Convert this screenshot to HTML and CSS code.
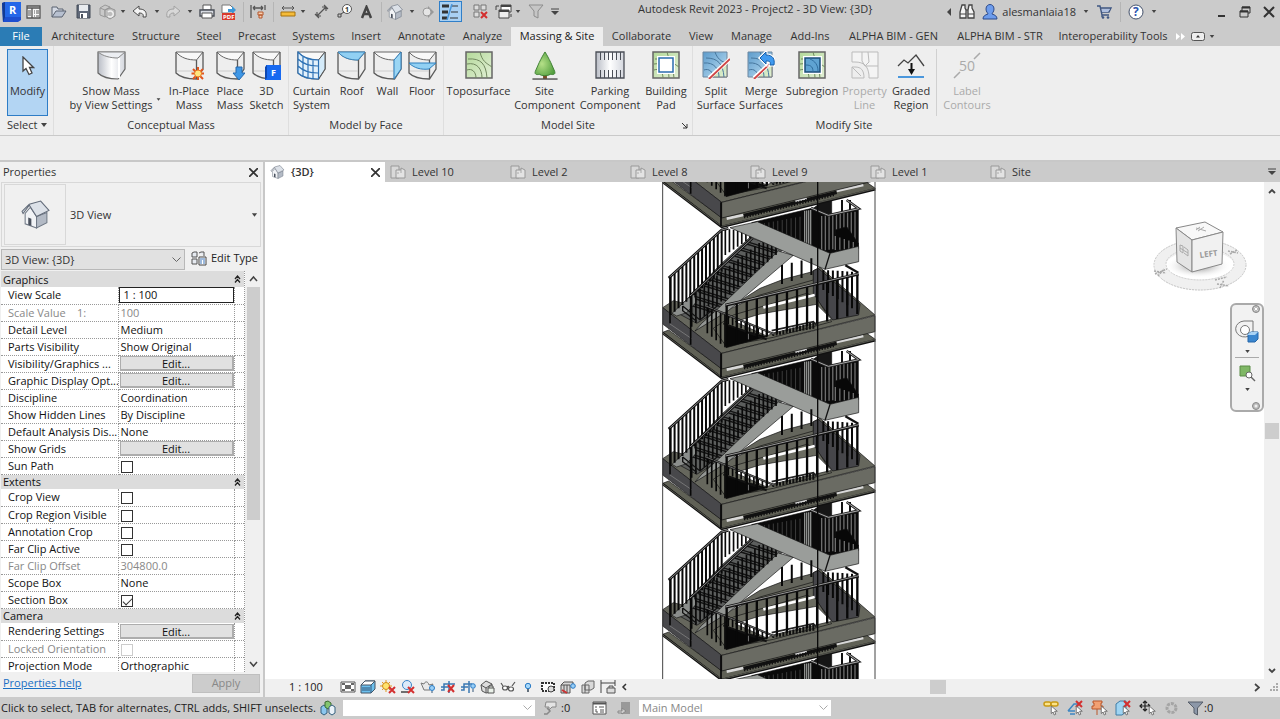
FILE: index.html
```html
<!DOCTYPE html>
<html lang="en">
<head>
<meta charset="utf-8">
<title>Autodesk Revit 2023 - Project2 - 3D View: {3D}</title>
<link rel="stylesheet" href="styles.css">
</head>
<body>
<svg class="defs" aria-hidden="true">
<defs>
<linearGradient id="gBlue" x1="0" y1="0" x2="1" y2="1"><stop offset="0" stop-color="#5c9bcb"/><stop offset="1" stop-color="#bfe0f4"/></linearGradient>
<linearGradient id="gGreen" x1="0" y1="0" x2="1" y2="1"><stop offset="0" stop-color="#b4d99a"/><stop offset="1" stop-color="#e2f0d6"/></linearGradient>
<linearGradient id="gGrey" x1="0" y1="0" x2="1" y2="0"><stop offset="0" stop-color="#b9bdc6"/><stop offset=".5" stop-color="#fff"/><stop offset="1" stop-color="#d4d7de"/></linearGradient>
<radialGradient id="gTree" cx=".35" cy=".5" r=".7"><stop offset="0" stop-color="#b5e088"/><stop offset="1" stop-color="#4f9c3c"/></radialGradient>
<symbol id="mass" viewBox="0 0 29 29"><path d="M1 1H28L21.500 9C13 9 6 7 1 1Z" fill="#f8f8f8" stroke="#666"/><path d="M1 1V22C6 27 14 28 21.500 28L28 18V1M21.500 9V28" fill="none" stroke="#5a5a5a" stroke-width="1.300"/><path d="M2 20H21" stroke="#ccc"/></symbol>
<symbol id="house" viewBox="0 0 28 28"><path d="M4 13V23L15 27V16L9 7Z" fill="#f1f3f6" stroke="#707986"/><path d="M15 16V27L25 22V12Z" fill="#b3bac5" stroke="#707986"/><path d="M1 11L8 4L19 1L27 10L15 16L8 5L2 13Z" fill="#dce1e8" stroke="#626b79"/><path d="M7 17L10 18V25L7 24Z" fill="#4b525e"/></symbol>
<symbol id="sheet" viewBox="0 0 16 15"><path d="M1 1H9V13H1Z" fill="#d9d9d9" stroke="#999"/><path d="M6 5H11V3L15 5V13H6Z" fill="#e3e3e3" stroke="#999"/><path d="M7 8H9M11 8V5" stroke="#aaa"/></symbol>
<symbol id="dd" viewBox="0 0 8 4"><path d="M1 0H7L4 4Z" fill="#444"/></symbol>
<symbol id="arrow" viewBox="0 0 12 14"><path d="M3 1V11L5.500 9L7 13L9 12L7.500 8H11Z" fill="#fff" stroke="#555"/></symbol>
<symbol id="contour" viewBox="0 0 28 28"><path d="M1 1H27V27H1Z" fill="url(#gGreen)" stroke="#666" stroke-width="1.500"/><path d="M2 19C7 17 11 21 11 27M2 13C12 11 17 18 17 27M3 8C16 7 21 13 22 27M15 1C17 10 21 12 27 16" fill="none" stroke="#71885f"/></symbol>
<symbol id="surf" viewBox="0 0 28 28"><path d="M1 1H25V26H1Z" fill="url(#gBlue)" stroke="#6c87a0"/><path d="M25 8V26H9Z" fill="url(#gGreen)" stroke="#777"/><path d="M2 19C7 17 11 21 11 26M2 12C12 11 17 18 17 26M4 7C16 7 21 13 22 26M13 1C15 7 19 11 25 12" fill="none" stroke="#47779e"/><path d="M7 27L28 8" stroke="#fff" stroke-width="4"/><path d="M7 28L28 8" stroke="#cf4545" stroke-width="1.800"/></symbol>
</defs>
</svg>

<div class="app">
<header class="top">
  <div class="titlebar">
    <div class="qat">
      <button class="ib" aria-label="Revit"><svg width="20" height="20" viewBox="0 0 20 20"><path d="M1 1L4 0H20V18L17 20H2Z" fill="#1d4fd0"/><path d="M4 0H20V15H4Z" fill="#2467e8"/><path d="M1 1L4 0V15L2 20Z" fill="#123a94"/><text x="8" y="12" class="logo">R</text></svg></button>
      <button class="ib" aria-label="Home"><svg width="15" height="14" viewBox="0 0 15 14"><path d="M1 1H14V13H1Z" fill="#f7f7f7" stroke="#555" stroke-width="1.300"/><path d="M1 3H14M6 3V13" stroke="#555" stroke-width="1.300"/><path d="M2 6H5M2 8H5M2 10H5M8 6H9M10 6H13M8 8H9M10 8H13M8 11H9M10 11H13" stroke="#555"/></svg></button>
      <button class="ib" aria-label="Open"><svg width="16" height="13" viewBox="0 0 16 13"><path d="M1 12V2H6L7 4H12V6" fill="#d5dae4" stroke="#5a6270"/><path d="M1 12L5 6H15L11 12Z" fill="#b7c0d0" stroke="#5a6270"/></svg></button>
      <button class="ib" aria-label="Save"><svg width="15" height="15" viewBox="0 0 15 15"><path d="M1 1H14V14H1Z" fill="#5f6878" stroke="#434a57"/><path d="M3 1H12V7H3Z" fill="#e8ebef"/><path d="M4 9H11V14H4Z" fill="#fff"/><path d="M5 10H7V14H5Z" fill="#4b525e"/></svg></button>
      <button class="ib" aria-label="Sync"><svg width="17" height="16" viewBox="0 0 17 16"><path d="M1 4L6 1L11 3V10L6 13L1 11Z" fill="#c9c9c9" stroke="#999"/><path d="M1 4L6 6L11 3M6 6V13" fill="none" stroke="#999"/><path d="M6 6L11 4L16 6V12L11 15L6 12Z" fill="#bcbcbc" stroke="#959595"/><path d="M9 8A3 3 0 1 1 9 12" fill="none" stroke="#f0f0f0" stroke-width="1.500"/></svg></button>
      <svg class="dd"><use href="#dd"/></svg>
      <button class="ib" aria-label="Undo"><svg width="16" height="14" viewBox="0 0 16 14"><path d="M1 6L7 1V4C13 4 15 7 14 12H11C12 9 10 8 7 8V11Z" fill="#f4f4f4" stroke="#4d4d4d"/></svg></button>
      <svg class="dd"><use href="#dd"/></svg>
      <button class="ib" aria-label="Redo"><svg width="16" height="14" viewBox="0 0 16 14"><path d="M15 6L9 1V4C3 4 1 7 2 12H5C4 9 6 8 9 8V11Z" fill="#d8d8d8" stroke="#a2a2a2"/></svg></button>
      <svg class="dd"><use href="#dd"/></svg>
      <button class="ib" aria-label="Print"><svg width="16" height="15" viewBox="0 0 16 15"><path d="M4 1H12V6H4Z" fill="#fff" stroke="#555"/><path d="M1 6H15V12H1Z" fill="#d6dae1" stroke="#4a4f58" stroke-width="1.400"/><path d="M3 9H13V14H3Z" fill="#fff" stroke="#555"/></svg></button>
      <button class="ib" aria-label="Export PDF"><svg width="16" height="16" viewBox="0 0 16 16"><path d="M1 1H9L12 4V9H1Z" fill="#fff" stroke="#777"/><path d="M7 5H11V2L15 6L11 10V8H7Z" fill="#3b97d8"/><path d="M1 9H14V16H1Z" fill="#d93a2c"/><text x="2" y="15" class="pdf">PDF</text></svg></button>
      <i class="sep"></i>
      <button class="ib" aria-label="Align"><svg width="16" height="15" viewBox="0 0 16 15"><path d="M1 1V14M15 1V6M3 4H13M3 4L5 2M3 4L5 6M13 4L11 2M13 4L11 6" stroke="#555" fill="none" stroke-width="1.300"/><path d="M8 8H13V11H8ZM9 11H12V14H9Z" fill="#f7d0b2" stroke="#b5562c"/></svg></button>
      <i class="sep"></i>
      <button class="ib" aria-label="Measure"><svg width="16" height="11" viewBox="0 0 16 11"><path d="M2 2H14M2 2L4 0M2 2L4 4M14 2L12 0M14 2L12 4" stroke="#555" fill="none"/><path d="M1 6H15V10H1Z" fill="#f5bc3a" stroke="#a6720f"/></svg></button>
      <svg class="dd"><use href="#dd"/></svg>
      <button class="ib" aria-label="Aligned Dimension"><svg width="15" height="15" viewBox="0 0 15 15"><path d="M3 12L12 3M1 10L5 14M10 1L14 5M3 12V8M3 12H7M12 3V7M12 3H8" stroke="#555" fill="none" stroke-width="1.200"/></svg></button>
      <button class="ib" aria-label="Tag"><svg width="15" height="15" viewBox="0 0 15 15"><circle cx="10" cy="5" r="4.500" fill="#fff" stroke="#555"/><path d="M1 10H4V13H1ZM4 10L7 8" stroke="#444" fill="none"/><text x="8" y="8" class="one">1</text></svg></button>
      <button class="ib" aria-label="Text"><svg width="13" height="14" viewBox="0 0 13 14"><path d="M2 13L6.500 2L11 13M4 9H9" fill="none" stroke="#444" stroke-width="2.500"/></svg></button>
      <i class="sep"></i>
      <button class="ib" aria-label="Default 3D View"><svg width="16" height="16"><use href="#house"/></svg></button>
      <svg class="dd"><use href="#dd"/></svg>
      <button class="ib" aria-label="Section"><svg width="14" height="14" viewBox="0 0 14 14"><path d="M7 1L13 7L7 13Z" fill="#999"/><circle cx="6" cy="7" r="4" fill="#e5e5e5" stroke="#999"/></svg></button>
      <button class="ib on" aria-label="Thin Lines"><svg width="18" height="16" viewBox="0 0 18 16"><path d="M1 2H8M1 8H7M1 14H6" stroke="#333" stroke-width="3"/><path d="M11 2H17M10 8H17M9 14H17" stroke="#333"/><path d="M11 0L6 16" stroke="#4b96d8" stroke-width="1.500"/></svg></button>
      <button class="ib" aria-label="Close Inactive"><svg width="15" height="15" viewBox="0 0 15 15"><path d="M1 1H6V6H1ZM8 1H13V6H8ZM1 8H6V13H1Z" fill="#ddd" stroke="#777"/><path d="M8 8L14 14M14 8L8 14" stroke="#d32f2f" stroke-width="2"/></svg></button>
      <button class="ib" aria-label="Switch Windows"><svg width="17" height="15" viewBox="0 0 17 15"><path d="M6 1H16V8H6Z" fill="#fff" stroke="#444"/><path d="M4 6H14V14H4Z" fill="#eee" stroke="#444"/><path d="M4 7H14M6 2H16" stroke="#444" stroke-width="2"/><path d="M1 6V2H4M16 10V13" stroke="#444" fill="none"/></svg></button>
      <svg class="dd"><use href="#dd"/></svg>
      <button class="ib" aria-label="Filter"><svg width="16" height="15" viewBox="0 0 16 15"><path d="M1 1H15L10 7V14L6 12V7Z" fill="#c6c6c6" stroke="#8d8d8d"/></svg></button>
      <button class="ib" aria-label="Customize"><svg width="8" height="8" viewBox="0 0 8 8"><path d="M0 1H8" stroke="#444"/><path d="M0 3H8L4 7Z" fill="#444"/></svg></button>
    </div>
    <div class="apptitle">Autodesk Revit 2023 - Project2 - 3D View: {3D}</div>
    <div class="account">
      <svg width="5" height="8" viewBox="0 0 5 8"><path d="M4 0V8L0 4Z" fill="#444"/></svg>
      <button class="ib" aria-label="Search"><svg width="16" height="16" viewBox="0 0 16 16"><path d="M3 1H6V4L7 6V14H1V8ZM10 1H13V4L15 8V14H9V6Z" fill="#f5f5f5" stroke="#444" stroke-width="1.300"/><path d="M7 6H9M1 10H7M9 10H15" stroke="#444"/></svg></button>
      <button class="ib user"><svg width="16" height="16" viewBox="0 0 16 16"><path d="M4 5C4 -1 12 -1 12 5C12 8 10 9 10 10C13 11 15 12 15 15H1C1 12 3 11 6 10C6 9 4 8 4 5Z" fill="#6d9cec" stroke="#2d4a8a"/></svg><span>alesmanlaia18</span></button>
      <svg class="dd"><use href="#dd"/></svg>
      <button class="ib" aria-label="Store"><svg width="17" height="14" viewBox="0 0 17 14"><path d="M1 1H4L6 10H13M4 3H15L13 7H5M6 10V12" fill="none" stroke="#3f5783" stroke-width="1.400"/><path d="M6 4H14L12 7H6Z" fill="#aebfe0"/><circle cx="7" cy="12.500" r="1.300" fill="#3f5783"/><circle cx="12" cy="12.500" r="1.300" fill="#3f5783"/></svg></button>
      <i class="sep"></i>
      <button class="ib" aria-label="Help"><svg width="16" height="16" viewBox="0 0 16 16"><circle cx="8" cy="8" r="7" fill="#fff" stroke="#44516b"/><text x="5" y="12" class="help">?</text></svg></button>
      <svg class="dd"><use href="#dd"/></svg>
    </div>
    <div class="win">
      <button class="ib" aria-label="Minimize"><svg width="11" height="12" viewBox="0 0 11 12"><path d="M2 10H9" stroke="#333" stroke-width="2"/></svg></button>
      <button class="ib" aria-label="Restore"><svg width="12" height="12" viewBox="0 0 12 12"><path d="M3 5V1H11V7H9M1 5H9V11H1Z" fill="none" stroke="#333"/><path d="M3 1.500H11M1 5.500H9" stroke="#333" stroke-width="2"/></svg></button>
      <button class="ib" aria-label="Close"><svg width="12" height="12" viewBox="0 0 12 12"><path d="M1 1L11 11M11 1L1 11" stroke="#333" stroke-width="2"/></svg></button>
    </div>
  </div>
  <nav class="tabs">
    <button class="file">File</button><button>Architecture</button><button>Structure</button><button>Steel</button><button>Precast</button><button>Systems</button><button>Insert</button><button>Annotate</button><button>Analyze</button><button class="cur">Massing &amp; Site</button><button>Collaborate</button><button>View</button><button>Manage</button><button>Add-Ins</button><button>ALPHA BIM - GEN</button><button>ALPHA BIM - STR</button><button>Interoperability Tools</button>
    <button aria-label="More tabs"><svg width="9" height="7" viewBox="0 0 9 7"><path d="M0 0L4 3.500L0 7ZM5 0L9 3.500L5 7Z" fill="#fff"/></svg></button>
    <button aria-label="Minimize ribbon" class="mini"><svg width="14" height="9" viewBox="0 0 14 9"><rect x=".5" y=".5" width="13" height="8" rx="2" fill="#eee" stroke="#555"/><path d="M5 5.500H9L7 3Z" fill="#333"/></svg><svg width="6" height="3"><use href="#dd"/></svg></button>
  </nav>
</header>

<section class="ribbon">
  <div class="grp g1"><div class="tools"><button class="t sel"><svg width="14" height="20" viewBox="0 0 14 20"><path d="M2 1V15L5 12.500L8 18.500L11 17L8.500 11.500H12.500Z" fill="#fff" stroke="#444" stroke-width="1.300"/></svg>Modify</button></div><div class="gl">Select&nbsp; <svg width="8" height="4"><use href="#dd"/></svg></div></div>
  <div class="grp g2"><div class="tools">
    <button class="t"><svg width="29" height="29" viewBox="0 0 29 29"><path d="M1 1H28V18L21 28C13 28 6 27 1 22Z" fill="url(#gGrey)" stroke="#666" stroke-width="1.200"/><path d="M1 1H28L21 7C13 7 6 5 1 1Z" fill="#eceef2" stroke="#888"/><path d="M22 7V27" stroke="#fff" stroke-width="2"/></svg>Show Mass<br>by View Settings</button>
    <svg class="dd low"><use href="#dd"/></svg>
    <button class="t"><svg width="29" height="29" viewBox="0 0 29 29"><use href="#mass"/><path d="M23 16V29M16.500 22.500H29M18 18L28 28M28 18L18 28" stroke="#e0551e" stroke-width="2"/><circle cx="23" cy="22.500" r="3.500" fill="#ffe680" stroke="#e87722"/></svg>In-Place<br>Mass</button>
    <button class="t"><svg width="29" height="29" viewBox="0 0 29 29"><use href="#mass"/><path d="M20 16H26V22H29L23 29L17 22H20Z" fill="#3e97e6" stroke="#2468ad"/></svg>Place<br>Mass</button>
    <button class="t"><svg width="29" height="29" viewBox="0 0 29 29"><use href="#mass"/><path d="M14 14H29V29H13Z" fill="#1769f0"/><path d="M13 16L15 14V27L13 29Z" fill="#0d47b0"/><text x="19" y="25" class="fl">F</text></svg>3D<br>Sketch</button>
  </div><div class="gl">Conceptual Mass</div></div>
  <div class="grp g3"><div class="tools">
    <button class="t"><svg width="29" height="29" viewBox="0 0 29 29"><use href="#mass"/><path d="M1 1C6 7 13 9 21.500 9V28C14 28 6 27 1 22Z" fill="#e3f1fb"/><path d="M21.500 9L28 1V18L21.500 28Z" fill="#d4ebfa" stroke="#555"/><path d="M1 1C6 7 13 9 21.500 9V28C14 28 6 27 1 22ZM1 8C6 13 13 15 21 15M1 15C6 20 13 22 21 22M6 5V26M11 8V27M16 8V28" fill="none" stroke="#2c71b5" stroke-width="1.200"/></svg>Curtain<br>System</button>
    <button class="t"><svg width="29" height="29"><use href="#mass"/><path d="M1 1H28L21 9C13 9 6 7 1 1Z" fill="#91d0f3" stroke="#3a86be"/></svg>Roof</button>
    <button class="t"><svg width="29" height="29"><use href="#mass"/><path d="M28 1V18L21 28V9Z" fill="#9bd6f4" stroke="#2f7fbd"/></svg>Wall</button>
    <button class="t"><svg width="29" height="29"><use href="#mass"/><path d="M1 12H28L21 18C13 19 6 17 1 12Z" fill="#91d0f3" stroke="#2f7fbd"/></svg>Floor</button>
  </div><div class="gl">Model by Face</div></div>
  <div class="grp g4"><div class="tools">
    <button class="t"><svg width="28" height="29" viewBox="0 0 28 29"><use href="#contour" width="28" height="28"/></svg>Toposurface</button>
    <button class="t"><svg width="28" height="29" viewBox="0 0 28 30"><path d="M12 22H16V29H12Z" fill="#7a4b26"/><path d="M1 29H27" stroke="#555" stroke-width="1.500"/><path d="M14 1C16 4 18 8 20 12L24 21C25 24 23 25 20 24C17 26 10 26 8 24C5 25 3 24 4 21L8 12C10 8 12 4 14 1Z" fill="url(#gTree)" stroke="#3f7f34"/></svg>Site<br>Component</button>
    <button class="t"><svg width="30" height="29" viewBox="0 0 30 29"><path d="M1 1H29V27H1Z" fill="url(#gGrey)" stroke="#4b4f57" stroke-width="1.300"/><path d="M5.500 1V9M9.500 1V9M13.500 1V9M17.500 1V9M21.500 1V9M25.500 1V9M5.500 19V27M9.500 19V27M13.500 19V27M17.500 19V27M21.500 19V27M25.500 19V27" stroke="#4b4f57"/></svg>Parking<br>Component</button>
    <button class="t"><svg width="28" height="29" viewBox="0 0 28 29"><use href="#contour" width="28" height="28"/><path d="M7 7H21V21H7Z" fill="#fff" stroke="#fff" stroke-width="4"/><path d="M7 7H21V21H7Z" fill="#fff" stroke="#2b6cae" stroke-width="1.500"/></svg>Building<br>Pad</button>
  </div><div class="gl">Model Site<svg class="launch" width="6" height="6" viewBox="0 0 6 6"><path d="M0 0L5 5M5 1V5H1" fill="none" stroke="#333"/></svg></div></div>
  <div class="grp g5"><div class="tools">
    <button class="t"><svg width="28" height="29" viewBox="0 0 28 29"><use href="#surf" width="28" height="28"/></svg>Split<br>Surface</button>
    <button class="t"><svg width="28" height="29" viewBox="0 0 28 29"><use href="#surf" width="28" height="28"/><path d="M13 7L19 1V4C26 4 28 8 27 14H23C24 11 23 10 19 10V13Z" fill="#3f9af0" stroke="#fff" stroke-width="3"/><path d="M13 7L19 1V4C26 4 28 8 27 14H23C24 11 23 10 19 10V13Z" fill="#3f9af0" stroke="#175ea8"/></svg>Merge<br>Surfaces</button>
    <button class="t"><svg width="28" height="29" viewBox="0 0 28 29"><use href="#contour" width="28" height="28"/><path d="M7 7H22V21H7Z" fill="#5fa3d2" stroke="#fff" stroke-width="4"/><path d="M7 7H22V21H7Z" fill="#5fa3d2" stroke="#1d4e79" stroke-width="1.500"/><path d="M8 14C14 14 15 17 15 21M12 8C17 10 20 14 20 20" fill="none" stroke="#2f6e9f"/></svg>Subregion</button>
    <button class="t" disabled><svg width="28" height="29" viewBox="0 0 28 29"><path d="M1 1H27V27H18V24C17 15 13 11 4 11H1Z" fill="#f4f4f4" stroke="#bbb"/><path d="M1 16H4C10 16 13 19 13 27H1ZM11 1V10L14 15L27 15M14 15L18 11L17 1M1 16L10 25" fill="none" stroke="#bbb"/></svg>Property<br>Line</button>
    <button class="t"><svg width="28" height="29" viewBox="0 0 28 29"><path d="M1 15L7 9L11 12L19 4L27 15" fill="none" stroke="#444" stroke-width="1.300"/><path d="M14.500 12V20" stroke="#111" stroke-width="2"/><path d="M11 18H18L14.500 24Z" fill="#111"/><path d="M1 26H27" stroke="#4a97dc" stroke-width="2"/></svg>Graded<br>Region</button>
    <i class="vsep"></i>
    <button class="t" disabled><svg width="28" height="29" viewBox="0 0 28 29"><path d="M21 8L27 2M1 27L7 21" stroke="#aaa" stroke-width="1.500"/><text x="6" y="20" class="fifty">50</text></svg>Label<br>Contours</button>
  </div><div class="gl">Modify Site</div></div>
</section>
<div class="options"></div>

<main class="work">
  <aside class="props">
    <div class="ptitle"><span>Properties</span><button class="ib" aria-label="Close properties"><svg width="9" height="9" viewBox="0 0 9 9"><path d="M0 0L9 9M9 0L0 9" stroke="#333" stroke-width="1.700"/></svg></button></div>
    <button class="type"><span class="thumb"><svg width="29" height="29"><use href="#house"/></svg></span><span class="tn">3D View</span><svg width="7" height="4"><use href="#dd"/></svg></button>
    <div class="inst"><span class="combo"><select aria-label="Instance"><option>3D View: {3D}</option></select><svg width="9" height="6" viewBox="0 0 9 6"><path d="M.5 .5L4.500 4.500L8.500 .5" fill="none" stroke="#666"/></svg></span><button class="ib et"><svg width="16" height="15" viewBox="0 0 16 15"><path d="M1 2L3 1H6V6H1ZM8 2L10 1H13V5M1 8H6V13H1Z" fill="#e6eaf0" stroke="#555"/><path d="M8 6H15V14H8Z" fill="#fff" stroke="#444"/><path d="M9 8H14M9 10H11M12 10H14M9 12H11M12 12H14" stroke="#3c75b8"/></svg>Edit Type</button></div>
    <div class="list">
      <div class="view">
      <table>
        <colgroup><col class="c1"><col class="c2"><col class="c3"></colgroup>
        <tbody>
        <tr class="h"><th colspan="2">Graphics</th><td><svg width="7" height="8" viewBox="0 0 7 8"><path d="M1 4L3.500 1L6 4M1 7.500L3.500 4.500L6 7.500" fill="none" stroke="#222" stroke-width="1.300"/></svg></td></tr>
        <tr><th><label for="vs">View Scale</label></th><td><input id="vs" class="vs" value="1 : 100"></td><td></td></tr>
        <tr class="off"><th>Scale Value &nbsp;&nbsp; 1:</th><td>100</td><td></td></tr>
        <tr><th>Detail Level</th><td>Medium</td><td></td></tr>
        <tr><th>Parts Visibility</th><td>Show Original</td><td></td></tr>
        <tr><th>Visibility/Graphics ...</th><td><button class="edit">Edit...</button></td><td></td></tr>
        <tr><th>Graphic Display Opt...</th><td><button class="edit">Edit...</button></td><td></td></tr>
        <tr><th>Discipline</th><td>Coordination</td><td></td></tr>
        <tr><th>Show Hidden Lines</th><td>By Discipline</td><td></td></tr>
        <tr><th>Default Analysis Dis...</th><td>None</td><td></td></tr>
        <tr><th>Show Grids</th><td><button class="edit">Edit...</button></td><td></td></tr>
        <tr><th><label for="k1">Sun Path</label></th><td><input type="checkbox" id="k1"></td><td></td></tr>
        <tr class="h"><th colspan="2">Extents</th><td><svg width="7" height="8" viewBox="0 0 7 8"><path d="M1 4L3.500 1L6 4M1 7.500L3.500 4.500L6 7.500" fill="none" stroke="#222" stroke-width="1.300"/></svg></td></tr>
        <tr><th><label for="k2">Crop View</label></th><td><input type="checkbox" id="k2"></td><td></td></tr>
        <tr><th><label for="k3">Crop Region Visible</label></th><td><input type="checkbox" id="k3"></td><td></td></tr>
        <tr><th><label for="k4">Annotation Crop</label></th><td><input type="checkbox" id="k4"></td><td></td></tr>
        <tr><th><label for="k5">Far Clip Active</label></th><td><input type="checkbox" id="k5"></td><td></td></tr>
        <tr class="off"><th>Far Clip Offset</th><td>304800.0</td><td></td></tr>
        <tr><th>Scope Box</th><td>None</td><td></td></tr>
        <tr><th><label for="k6">Section Box</label></th><td><input type="checkbox" id="k6" checked></td><td></td></tr>
        <tr class="h"><th colspan="2">Camera</th><td><svg width="7" height="8" viewBox="0 0 7 8"><path d="M1 4L3.500 1L6 4M1 7.500L3.500 4.500L6 7.500" fill="none" stroke="#222" stroke-width="1.300"/></svg></td></tr>
        <tr><th>Rendering Settings</th><td><button class="edit">Edit...</button></td><td></td></tr>
        <tr class="off"><th><label for="k7">Locked Orientation</label></th><td><input type="checkbox" id="k7" disabled></td><td></td></tr>
        <tr><th>Projection Mode</th><td>Orthographic</td><td></td></tr>
        </tbody>
      </table>
      </div>
      <div class="vscroll"><svg width="9" height="16" viewBox="0 0 9 16"><path d="M1 10L4.500 6L8 10" fill="none" stroke="#444" stroke-width="1.500"/></svg><i></i><svg class="end" width="9" height="16" viewBox="0 0 9 16"><path d="M1 6L4.500 10L8 6" fill="none" stroke="#444" stroke-width="1.500"/></svg></div>
    </div>
    <div class="pfoot"><a href="#">Properties help</a><button disabled>Apply</button></div>
  </aside>

  <section class="doc">
    <div class="dtabs">
      <button class="cur"><svg width="15" height="14"><use href="#house"/></svg><b>{3D}</b><svg width="9" height="9" viewBox="0 0 9 9"><path d="M0 0L9 9M9 0L0 9" stroke="#333" stroke-width="1.700"/></svg></button>
      <button><svg width="16" height="15"><use href="#sheet"/></svg>Level 10</button>
      <button><svg width="16" height="15"><use href="#sheet"/></svg>Level 2</button>
      <button><svg width="16" height="15"><use href="#sheet"/></svg>Level 8</button>
      <button><svg width="16" height="15"><use href="#sheet"/></svg>Level 9</button>
      <button><svg width="16" height="15"><use href="#sheet"/></svg>Level 1</button>
      <button><svg width="16" height="15"><use href="#sheet"/></svg>Site</button>
      <span class="more"><svg width="8" height="8" viewBox="0 0 8 8"><path d="M0 1H8" stroke="#444"/><path d="M0 3H8L4 7Z" fill="#444"/></svg></span>
    </div>
    <div class="body">
      <div class="canvas">
        <svg class="model" id="model" width="216" height="498" viewBox="36 6 648 1494" aria-label="Stair tower model"></svg>
        <svg class="cube" width="96" height="78" viewBox="0 0 96 78">
          <defs><radialGradient id="sh"><stop offset="0" stop-color="#777"/><stop offset="1" stop-color="#fff" stop-opacity="0"/></radialGradient></defs>
          <ellipse cx="48" cy="47" rx="40" ry="20" fill="none" stroke="#f0f0f0" stroke-width="11"/>
          <ellipse cx="48" cy="47" rx="46" ry="25" fill="none" stroke="#c4c4c4" stroke-dasharray="2 1"/>
          <ellipse cx="48" cy="46" rx="34" ry="16" fill="none" stroke="#ccc" stroke-dasharray="2 1"/>
          <ellipse cx="46" cy="48" rx="33" ry="12" fill="url(#sh)"/>
          <path d="M24 10L53 4L71 14L40 22Z" fill="#f8f8f8" stroke="#888"/>
          <path d="M24 10L40 22V54L25 44Z" fill="#e4e4e4" stroke="#888"/>
          <path d="M40 22L71 14L70 46L40 54Z" fill="#f1f1f1" stroke="#888"/>
          <text x="48" y="40" class="face" transform="rotate(-8 48 40)">LEFT</text>
          <path d="M28 27L31 28V35L28 33ZM32 29L36 32V38L32 35M28 30L36 35M44 10L54 13M46 13L52 9M44 12L48 9" fill="none" stroke="#aaa"/>
          <path d="M2 53L14 55M3 56L15 51M6 58L12 51M63 62L75 59M65 66L77 68M68 70L72 62M76 33L86 35M78 36L85 32" stroke="#aaa" stroke-width="1.500" stroke-dasharray="2 1"/>
        </svg>
        <div class="nav">
          <svg width="8" height="8" viewBox="0 0 8 8"><circle cx="4" cy="4" r="3.500" fill="#bbb" stroke="#888"/><path d="M2.500 2.500L5.500 5.500M5.500 2.500L2.500 5.500" stroke="#fff"/></svg>
          <button class="ib" aria-label="Steering wheel"><svg width="24" height="24" viewBox="0 0 24 24"><path d="M9 1H18V12A9 8 0 1 1 9 1Z" fill="#f2f2f2" stroke="#777"/><circle cx="10" cy="10" r="4.500" fill="#fff" stroke="#777"/><path d="M13 14L16 12H23V19L20 22H13Z" fill="#3a86cf" stroke="#2667a8"/><path d="M13 14L16 12H23L20 15H13Z" fill="#a9d3f5"/></svg></button>
          <svg width="7" height="3"><use href="#dd"/></svg>
          <hr>
          <button class="ib" aria-label="Zoom"><svg width="17" height="17" viewBox="0 0 17 17"><path d="M1 1H11V11H1Z" fill="#7fb765" stroke="#5b8c46"/><circle cx="10" cy="10" r="3" fill="#fff" stroke="#666"/><path d="M12 12L16 16" stroke="#666" stroke-width="1.500"/></svg></button>
          <svg width="7" height="3"><use href="#dd"/></svg>
          <svg class="last" width="8" height="8" viewBox="0 0 8 8"><circle cx="4" cy="4" r="3.500" fill="#bbb" stroke="#888"/><circle cx="4" cy="4" r="1.500" fill="#eee"/></svg>
        </div>
      </div>
      <div class="cscroll"><svg width="8" height="16" viewBox="0 0 8 16"><path d="M1 11L4 8L7 11" fill="none" stroke="#444" stroke-width="1.800"/></svg><i></i><svg width="8" height="16" viewBox="0 0 8 16"><path d="M1 6L4 9L7 6" fill="none" stroke="#444" stroke-width="1.800"/></svg></div>
    </div>
    <div class="vcb">
      <span class="scale">1 : 100</span>
      <div class="vicons">
        <svg viewBox="0 0 16 14"><path d="M1 2H15V12H1Z" fill="#fff" stroke="#555"/><path d="M2 3H5V5H2ZM11 3H14V5H11ZM2 9H5V11H2ZM11 9H14V11H11ZM5 5H11V9H5Z" fill="#666"/></svg>
        <svg viewBox="0 0 16 14"><path d="M1 5L5 1H15V9L11 13H1Z" fill="#6cc0ee" stroke="#456"/><path d="M1 5L5 1H15L11 5Z" fill="#fff" stroke="#456"/><path d="M11 5V13M2 8H10M2 10H10" stroke="#357" fill="none"/></svg>
        <svg viewBox="0 0 16 14"><path d="M6 0V12M0 6H12M2 2L10 10M10 2L2 10" stroke="#e49a20"/><circle cx="6" cy="6" r="3.500" fill="#ffe36e" stroke="#d18c18"/><path d="M9 7L15 13M15 7L9 13" stroke="#d32f2f" stroke-width="2"/></svg>
        <svg viewBox="0 0 16 14"><circle cx="7" cy="5" r="4.500" fill="#dcebfa" stroke="#3a84c7"/><path d="M1 12H8" stroke="#444" stroke-width="1.500"/><path d="M8 7L14 13M14 7L8 13" stroke="#d32f2f" stroke-width="2"/></svg>
        <svg viewBox="0 0 16 14"><path d="M1 3L4 10H10L13 4L9 5C8 1 5 1 4 4Z" fill="#e9e9e9" stroke="#777"/><circle cx="12" cy="8" r="2.500" fill="#9bd0f7" stroke="#2a7bc5"/><path d="M12 11V13" stroke="#357"/></svg>
        <svg viewBox="0 0 16 14"><path d="M1 10H4V4H9V1M4 4H15M9 4V13M1 7H8" stroke="#3a78b2" fill="none" stroke-width="1.500"/><path d="M8 5L14 12M14 5L8 12" stroke="#d32f2f" stroke-width="2"/></svg>
        <svg viewBox="0 0 16 14"><path d="M1 10H4V4H9V1M4 4H12M9 4V13M1 7H8" stroke="#3a78b2" fill="none" stroke-width="1.500"/><circle cx="13" cy="6" r="2.300" fill="#9bd0f7" stroke="#2a7bc5"/><path d="M13 9V12" stroke="#357"/></svg>
        <svg viewBox="0 0 16 14"><path d="M1 5L6 1L12 4V12L6 13L2 11Z" fill="#ddd" stroke="#555"/><path d="M1 5L6 8L12 4M6 8V13" fill="none" stroke="#555"/><path d="M8 8H14V13H8ZM9 8V6H13V8" fill="#eaf1e9" stroke="#555"/></svg>
        <svg viewBox="0 0 16 14"><path d="M1 3L3 6M15 2L12 6M7 7C8 6 9 6 9 8" fill="none" stroke="#555" stroke-width="1.200"/><ellipse cx="5" cy="8" rx="2.500" ry="2" fill="#fff" stroke="#555" stroke-width="1.200"/><ellipse cx="11" cy="9" rx="2.500" ry="2" fill="#fff" stroke="#555" stroke-width="1.200"/></svg>
        <svg viewBox="0 0 16 14"><circle cx="8" cy="6" r="2.700" fill="#a6d8fa" stroke="#2a7bc5"/><path d="M8 9V12" stroke="#345" stroke-width="1.500"/></svg>
        <svg viewBox="0 0 16 14"><path d="M2 3H14V11H2Z" fill="#fff" stroke="#333" stroke-width="2" stroke-dasharray="2 1"/><circle cx="11" cy="9" r="3" fill="#ddd" stroke="#444"/></svg>
        <svg viewBox="0 0 16 14"><path d="M1 5L4 2H13V8M1 5H10V13H1ZM4 5V13M7 5V13" fill="#d7d7d7" stroke="#555"/><path d="M2 10L7 13" stroke="#c33" stroke-width="2"/><circle cx="13" cy="6" r="2.300" fill="#9bd0f7" stroke="#2a7bc5"/></svg>
        <svg viewBox="0 0 16 14"><path d="M5 3L8 1H14V8L11 10H5ZM2 5H9V13H2Z" fill="#d9d9d9" stroke="#666"/><path d="M5 5V13" stroke="#666"/></svg>
        <svg viewBox="0 0 16 14"><path d="M1 0V13M15 0V6M1 3H15" stroke="#444" fill="none"/><path d="M7 8H15V13H7ZM9 8V6H13V8" fill="#ddd" stroke="#555"/></svg>
        <svg class="back" viewBox="0 0 8 14"><path d="M6 4L3 7L6 10" fill="none" stroke="#333" stroke-width="1.500"/></svg>
      </div>
      <div class="hscroll"><i></i></div>
      <svg width="6" height="9" viewBox="0 0 6 9"><path d="M1 1L5 4.500L1 8" fill="none" stroke="#444" stroke-width="1.700"/></svg>
      <svg class="grip" width="9" height="9" viewBox="0 0 9 9"><path d="M7 1H9M4 4H6M7 4H9M1 7H3M4 7H6M7 7H9" stroke="#aaa" stroke-width="2"/></svg>
    </div>
  </section>
</main>

<footer class="status">
  <span class="msg">Click to select, TAB for alternates, CTRL adds, SHIFT unselects.</span>
  <svg width="16" height="16" viewBox="0 0 16 16"><path d="M1 7L4 5L7 7V13L4 15L1 13Z" fill="#8cc7ee" stroke="#35617f"/><path d="M5 2L8 1L11 3V8L8 9L5 7Z" fill="#84c56f" stroke="#3d6c31"/><path d="M9 7L12 5L15 7V13L12 15L9 13Z" fill="#e9f1f8" stroke="#35617f"/></svg>
  <span class="sbox ws"><select aria-label="Workset"><option></option></select><svg width="9" height="6" viewBox="0 0 9 6"><path d="M.5 .5L4.500 4.500L8.500 .5" fill="none" stroke="#aaa"/></svg></span>
  <span class="req"><svg width="14" height="14" viewBox="0 0 14 14"><path d="M3 1H13V6H9L6 9V6H2Z" fill="#e4e4e4" stroke="#888"/><path d="M4 7L7 10L4 13H1" fill="none" stroke="#888" stroke-width="1.500"/></svg>:0</span>
  <button class="ib" aria-label="Design options"><svg width="15" height="14" viewBox="0 0 15 14"><path d="M1 1H14V13H1Z" fill="#fff" stroke="#555"/><path d="M1 2.500H14" stroke="#555" stroke-width="2"/><path d="M3 6H5M7 6H12M4 8V11H6M8 9H12M8 11H12" stroke="#555" fill="none"/></svg></button>
  <svg width="14" height="14" viewBox="0 0 14 14"><path d="M4 1H13V13H4Z" fill="#999"/><path d="M1 10H5V7L9 10L5 13V12H1Z" fill="#ccc" stroke="#888"/></svg>
  <span class="sbox mm"><select aria-label="Design option"><option>Main Model</option></select><svg width="9" height="6" viewBox="0 0 9 6"><path d="M.5 .5L4.500 4.500L8.500 .5" fill="none" stroke="#aaa"/></svg></span>
  <div class="picks">
    <svg viewBox="0 0 17 16"><rect x="1" y="2" width="7" height="4" rx="2" fill="#fbe38a" stroke="#c99a15" stroke-width="1.500"/><rect x="8" y="2" width="7" height="4" rx="2" fill="#fbe38a" stroke="#c99a15" stroke-width="1.500"/><use href="#arrow" x="6" y="5" width="9" height="11"/></svg>
    <svg viewBox="0 0 17 16"><path d="M1 11L7 4H12M1 11H8M3 14H8" fill="none" stroke="#3e87c2" stroke-width="1.500"/><path d="M9 1L15 7M15 1L9 7" stroke="#d32f2f" stroke-width="2"/><use href="#arrow" x="7" y="5" width="9" height="11"/></svg>
    <svg viewBox="0 0 17 16"><path d="M2 1H11V3H10V6H12V9H1V6H3V3H2ZM6 9V15" fill="#f2a072" stroke="#b9572a"/><use href="#arrow" x="8" y="5" width="9" height="11"/></svg>
    <svg viewBox="0 0 17 16"><path d="M1 4L5 1H11V12L7 15H1Z" fill="#9fd4f2" stroke="#3f7ca6"/><path d="M9 1L15 7M15 1L9 7" stroke="#d32f2f" stroke-width="2"/><use href="#arrow" x="6" y="5" width="9" height="11"/></svg>
    <svg viewBox="0 0 17 16"><path d="M6 1V11M1 6H11M4 3L6 1L8 3M4 9L6 11L8 9M3 4L1 6L3 8M9 4L11 6" stroke="#222" fill="none" stroke-width="1.200"/><use href="#arrow" x="8" y="5" width="9" height="11"/></svg>
    <svg viewBox="0 0 17 16"><circle cx="8.500" cy="8" r="4.500" fill="none" stroke="#a5a5a5" stroke-width="3" stroke-dasharray="3 1"/></svg>
    <svg viewBox="0 0 17 16"><path d="M1 2H16L10.500 8V15L7 13V8Z" fill="#8c97a8" stroke="#555c68"/></svg>
  </div>
  <span class="cnt">:0</span>
</footer>
</div>
<script src="stairs.js"></script>
</body>
</html>
```

FILE: styles.css
```css
* { box-sizing: border-box; }
body { margin: 0; font-family: "Open Sans", "Noto Sans", sans-serif; font-size: 11px; line-height: 14px; color: #333; background: #ccc; }
button, input, select { font: inherit; color: inherit; margin: 0; padding: 0; border: 0; background: none; border-radius: 0; }
svg { display: block; flex: none; }
.defs { position: absolute; width: 0; height: 0; }
.app { height: 100vh; min-width: 1200px; display: flex; flex-direction: column; overflow: hidden; }
.ib { display: flex; align-items: center; justify-content: center; }
.dd { width: 6px; height: 3px; }
.sep { width: 1px; height: 20px; background: #b5b5b5; }
.logo, .pdf, .one, .help, .fl { font-weight: 700; }
.logo { font-size: 11px; fill: #fff; }
.pdf { font-size: 6px; fill: #fff; }
.one { font-size: 7px; fill: #333; }
.help { font-size: 12px; fill: #2b55b0; }
.fl { font-size: 9px; fill: #fff; }
.fifty { font-size: 14px; fill: #aaa; }

.top { background: #cbcbcb; }
.titlebar { display: flex; height: 27px; padding-bottom: 4px; }
.qat { display: grid; align-items: center; justify-items: center; grid-template-columns: 22px 23px 28px 21px 26px 5px 29px 5px 28px 6px 27px 18px 11px 18px 12px 18px 12px 24px 23px 20px 10px 18px 15px 18px 26px 35px 11px 18px 18px 20px; }
.ib.on { width: 23px; height: 21px; border: 1px solid #2f7fc9; background: #a9d0f2; }
.apptitle { padding-left: 73px; line-height: 18px; flex: 1; white-space: nowrap; }
.account { display: flex; align-items: center; gap: 7px; padding-right: 59px; }
.user { gap: 4px; }
.win { display: flex; align-items: center; gap: 12px; padding-right: 5px; }
.tabs { display: grid; height: 19px; grid-template-columns: 42px 82px 64px 42px 54px 59px 46px 65px 57px 92px 77px 42px 59px 58px 109px 104px 122px 12px 34px; }
.tabs button { white-space: nowrap; display: flex; align-items: center; justify-content: center; padding-bottom: 1px; }
.tabs .file { background: #2b7cb5; color: #fff; }
.tabs .cur { background: #eee; color: #222; }
.tabs .mini { gap: 4px; }

.ribbon { display: flex; height: 90px; background: #eee; border-bottom: 1px solid #c9c9c9; }
.grp { display: flex; flex-direction: column; border-right: 1px solid #dedede; }
.grp:last-child { border: 0; }
.tools { display: grid; height: 71px; padding-top: 3px; }
.t { display: flex; flex-direction: column; align-items: center; height: 67px; padding-top: 1px; white-space: nowrap; }
.t svg { margin: 1px 0 4px; }
.t:disabled { color: #aaa; }
.t.sel { background: #b3d5f3; border: 1px solid #2d7cc6; padding-top: 5px; }
.t.sel svg { margin-bottom: 8px; }
.gl { display: flex; align-items: center; justify-content: center; line-height: 16px; position: relative; }
.launch { position: absolute; right: 4px; top: 6px; }
.g1 { width: 54px; padding-left: 7px; }
.g1 .gl { justify-content: flex-start; }
.g1 .tools { grid-template-columns: 41px; }
.g2 { width: 235px; }
.g2 .tools { grid-template-columns: 90px 11px 44px 38px 35px; padding-left: 12px; }
.low { align-self: end; margin-bottom: 16px; width: 5px; }
.g3 { width: 155px; }
.g3 .tools { grid-template-columns: 41px 39px 33px 36px; padding-left: 2px; }
.g4 { width: 249px; }
.g4 .tools { grid-template-columns: 65px 67px 64px 48px; padding-left: 2px; }
.g5 { width: 302px; }
.g5 .tools { grid-template-columns: 42px 48px 54px 51px 42px 9px 52px; padding-left: 2px; }
.vsep { width: 1px; height: 67px; background: #d0d0d0; margin-left: 4px; }
.options { height: 24px; background: #eee; flex: none; }

.work { flex: 1; display: flex; min-height: 0; border-top: 2px solid #c8c8c8; }
.props { width: 265px; flex: none; background: #f0f0f0; border-right: 2px solid #c8c8c8; padding: 0 2px 0 1px; display: flex; flex-direction: column; }
.ptitle { display: flex; justify-content: space-between; align-items: center; height: 20px; padding: 0 3px 0 2px; }
.type { display: flex; align-items: center; height: 65px; border: 1px solid #d8d8d8; padding: 1px 2px; text-align: left; }
.thumb { width: 62px; height: 61px; border: 1px solid #d8d8d8; display: flex; align-items: center; justify-content: center; }
.tn { flex: 1; padding-left: 4px; }
.inst { display: flex; height: 24px; padding-top: 2px; align-items: flex-start; gap: 6px; }
.combo { display: flex; align-items: center; width: 184px; height: 21px; border: 1px solid #b8b8b8; background: #e1e1e1; padding-right: 3px; }
.combo select, .sbox select { appearance: none; flex: 1; min-width: 0; padding-left: 3px; outline: 0; }
.et { gap: 4px; height: 18px; color: #222; }
.list { flex: 1; display: flex; min-height: 0; background: #fff; }
.view { flex: 1; overflow: hidden; border-right: 1px dotted #999; }
table { width: 100%; table-layout: fixed; border-collapse: collapse; color: #111; }
.c1 { width: 117px; }
.c2 { width: 116px; }
tr { height: 17px; }
th, td { padding: 0 0 0 2px; height: 17px; line-height: 16px; text-align: left; font-weight: 400; white-space: nowrap; overflow: hidden; border: 1px dotted #999; border-width: 0 1px 1px 0; }
th { padding-left: 7px; }
th:first-child { border-left: 0; }
td:last-child { border-right: 0; }
tr.h, tr.h th, tr.h td { height: 16px; line-height: 15px; background: #dcdcdc; border: 0; }
tr + tr.h, tr + tr.h th, tr + tr.h td { height: 15px; line-height: 14px; }
tr.h th { padding-left: 2px; }
tr.h td { padding-left: 0; }
.off { color: #888; }
.vs { display: block; width: 115px; height: 16px; margin-left: -2px; border: 1px solid #222; padding-left: 4px; }
.edit { display: block; width: 114px; height: 15px; line-height: 13px; margin: 0 0 0 -1px; background: #e1e1e1; border: 1px solid #adadad; border-width: 1px 2px 2px 1px; }
input[type=checkbox] { appearance: none; display: block; width: 12px; height: 12px; border: 1px solid #333; background: #fff; margin-top: 2px; }
input[type=checkbox]:disabled { border-color: #ccc; }
input[type=checkbox]:checked::after { content: ""; display: block; width: 8px; height: 4px; margin: 2px 0 0 1px; border: solid #333; border-width: 0 0 1px 1px; transform: rotate(-45deg); }
.vscroll { width: 16px; background: #f0f0f0; display: flex; flex-direction: column; align-items: center; }
.vscroll i { width: 13px; height: 233px; background: #cdcdcd; }
.vscroll .end { margin-top: auto; }
.pfoot { height: 25px; display: flex; align-items: center; justify-content: space-between; padding: 0 1px 3px 2px; }
.pfoot a { color: #1a6fc4; }
.pfoot button { width: 68px; height: 19px; background: #ccc; border: 1px solid #bfbfbf; color: #888; }

.doc { flex: 1; display: flex; flex-direction: column; min-width: 0; background: #fff; }
.dtabs { display: flex; height: 20px; background: #cbcbcb; }
.dtabs button { width: 120px; display: flex; align-items: center; gap: 6px; padding: 0 5px; }
.dtabs .cur { background: #fff; }
.dtabs b { flex: 1; text-align: left; font-weight: 600; }
.more { margin-left: auto; display: flex; align-items: center; padding-right: 4px; }
.body { flex: 1; display: flex; min-height: 0; }
.canvas { flex: 1; position: relative; overflow: hidden; background: #fff; }
.model { position: absolute; left: 397px; top: 0; }
.cube { position: absolute; right: 16px; top: 36px; }
.face { font-size: 8px; fill: #999; font-weight: 700; }
.nav { position: absolute; right: 0; top: 121px; width: 34px; height: 109px; border: 2px solid #aaa; border-radius: 6px; background: #f2f2f2; display: flex; flex-direction: column; align-items: center; }
.nav > svg:first-child, .nav .last { align-self: flex-end; margin-right: 2px; }
.nav .ib { margin: 7px 0 6px; }
.nav hr { width: 24px; height: 1px; border: 0; background: #aaa; margin: 4px 0 0; }
.nav .last { margin-top: auto; }
.cscroll { width: 16px; background: #f0f0f0; display: flex; flex-direction: column; align-items: center; justify-content: space-between; }
.cscroll i { width: 14px; height: 16px; background: #cdcdcd; }
.vcb { height: 18px; background: #f0f0f0; display: flex; align-items: center; padding: 0 2px 2px 0; }
.scale { width: 75px; padding-left: 24px; color: #222; }
.vicons { display: flex; gap: 4px; }
.vicons svg { width: 16px; height: 14px; }
.vicons .back { width: 8px; }
.hscroll { flex: 1; height: 14px; display: flex; justify-content: center; padding-right: 6px; }
.hscroll i { width: 16px; background: #cdcdcd; }
.grip { margin-left: 9px; }

.status { height: 22px; background: #cbcbcb; display: flex; align-items: center; color: #222; white-space: nowrap; }
.msg { width: 320px; padding-left: 1px; }
.sbox { display: flex; align-items: center; width: 192px; height: 16px; background: #fff; padding-right: 3px; color: #888; }
.ws { margin-left: 7px; margin-right: 8px; }
.req { display: flex; align-items: center; gap: 4px; width: 49px; }
.status > .ib + svg { margin: 0 8px 0 10px; }
.picks { margin-left: auto; display: flex; gap: 7px; }
.picks svg { width: 17px; height: 16px; }
.cnt { width: 76px; }
```

FILE: stairs.js
```js
const model = document.getElementById('model');
const NS = 'http://www.w3.org/2000/svg';

function add(tag, attrs, parent) {
  const el = document.createElementNS(NS, tag);
  for (const k in attrs) el.setAttribute(k, attrs[k]);
  parent.appendChild(el);
  return el;
}
function poly(g, points, fill) {
  add('polygon', { points, fill, stroke: '#111', 'stroke-width': 2 }, g);
}
function line(g, d, stroke, width) {
  add('path', { d, fill: 'none', stroke, 'stroke-width': width }, g);
}
// Evenly spaced uprights between a sloping top edge and a sloping bottom edge.
function posts(g, x0, x1, n, top, bottom, color, width) {
  let d = '';
  for (let i = 0; i <= n; i++) {
    const t = i / n;
    const x = x0 + (x1 - x0) * t;
    const a = top[0] + (top[1] - top[0]) * t;
    const b = bottom[0] + (bottom[1] - bottom[0]) * t;
    d += `M${x} ${a}V${b}`;
  }
  line(g, d, color, width);
}

function storey(offset) {
  const g = add('g', { transform: `translate(0 ${offset})` }, model);
  // upper flight and its railing
  poly(g, '490,85 510,70 545,60 545,104 535,106', '#161616');
  poly(g, '305,128 485,85 535,106 625,85 625,205 540,222 400,170', '#0a0a0a');
  posts(g, 464, 482, 3, [92, 90], [190, 198], '#8d8f8d', 4);
  posts(g, 515, 615, 9, [108, 95], [212, 200], '#6d6d6d', 4);
  posts(g, 330, 450, 9, [132, 110], [142, 180], '#555', 2);
  poly(g, '556,150 590,140 625,190 625,205 556,210', '#080808');
  posts(g, 556, 610, 4, [168, 186], [210, 206], '#6d6d6d', 4);
  line(g, 'M576 60V98M600 60V92', '#111', 6);
  line(g, 'M483 84L535 106L626 86L590 60', '#222', 8);
  line(g, 'M483 84L535 106L626 86L590 60', '#aaa', 3);

  // rear landing edge and the inner well
  poly(g, '330,325 400,298 495,273 510,300 350,345 250,375', '#64655c');
  poly(g, '38,383 70,362 215,398 330,345 490,300 490,272 510,262 675,405 215,520', '#66675d');
  poly(g, '490,272 505,265 630,372 626,405 548,420 490,345', '#46464a');
  poly(g, '250,405 470,340 497,350 545,425 370,472 228,498 190,445', '#6b6c61');
  line(g, 'M340 382L494 345', '#fff', 8);
  poly(g, '255,425 330,402 500,373 545,418 372,458 350,468', '#fff');
  posts(g, 370, 490, 12, [459, 426], [468, 446], '#111', 6);
  line(g, 'M365 452L490 425L500 436', '#222', 5);
  poly(g, '228,435 350,470 228,503', '#080808');
  line(g, 'M294 452V478', '#ccc', 3);

  // lower slab seen below the landing
  poly(g, '38,457 56,450 215,565 650,460 676,478 215,592', '#606156');
  line(g, 'M280 560L560 490', '#111', 10);
  line(g, 'M230 569L280 558M560 486L640 468M436 516L470 507', '#d8d8d8', 8);
  posts(g, 284, 550, 32, [556, 490], [568, 502], '#111', 4);
  line(g, 'M38 459L215 594L676 481', '#111', 7);
  line(g, 'M38 459L215 592L676 479', '#77786c', 2);
  poly(g, '38,383 215,520 215,567 38,432', '#48484b');
  poly(g, '215,520 675,407 675,455 215,567', '#6a6b63');
  line(g, 'M60 432L125 476', '#8c8c8c', 2);

  // lower flight: treads, stringers
  poly(g, '300,172 400,208 215,385 140,430 75,395 215,250', '#5c5e5d');
  let treads = '';
  for (let i = 0; i < 11; i++) {
    const x = 290 - i * 18;
    const y = 185 + i * 18;
    treads += `M${x} ${y}l90 28M${x} ${y + 7}l90 28`;
  }
  line(g, treads, '#141414', 4);
  poly(g, '205,385 385,213 430,226 235,392 135,453 155,430', '#949794');
  poly(g, '66,400 130,340 140,365 110,398 80,408', '#8b8e8c');
  posts(g, 125, 378, 20, [345, 150], [440, 225], '#090909', 5);
  posts(g, 62, 215, 13, [288, 150], [405, 275], '#080808', 6);
  posts(g, 226, 300, 6, [145, 160], [225, 175], '#080808', 5);
  line(g, 'M56 294L215 150L235 145M120 348L308 174', '#111', 8);
  line(g, 'M56 294L215 150L235 145M120 348L308 174', '#888', 3);
  poly(g, '240,143 322,125 540,220 626,199 626,245 525,268', '#9a9d9a');
  line(g, 'M540 220L525 268', '#111', 4);

  // short railing beside the well
  posts(g, 172, 225, 4, [380, 402], [460, 502], '#060606', 5);
  posts(g, 235, 350, 9, [405, 455], [432, 472], '#060606', 5);
  line(g, 'M168 378L372 462M220 430L350 478', '#111', 6);
  line(g, 'M168 378L372 462', '#999', 2);
  line(g, 'M98 378L150 420L205 375M98 378V392L140 424', '#111', 4);

  // railing behind and railing in front
  posts(g, 396, 484, 3, [255, 235], [312, 285], '#080808', 6);
  posts(g, 520, 606, 6, [270, 275], [330, 385], '#080808', 6);
  line(g, 'M586 256L625 278', '#111', 7);
  posts(g, 230, 622, 13, [375, 282], [498, 402], '#080808', 7);
  line(g, 'M226 376L626 282', '#111', 9);
  line(g, 'M226 375L626 281', '#999', 3);
  line(g, 'M60 290V430M122 348V494M213 520V592', '#080808', 5);
}

[1359, 906, 453, 0, -453].forEach(storey);
line(model, 'M38 0V1500M675 0V1500', '#444', 3);
line(model, 'M503 0V1500', '#0a0a0a', 4);
```
